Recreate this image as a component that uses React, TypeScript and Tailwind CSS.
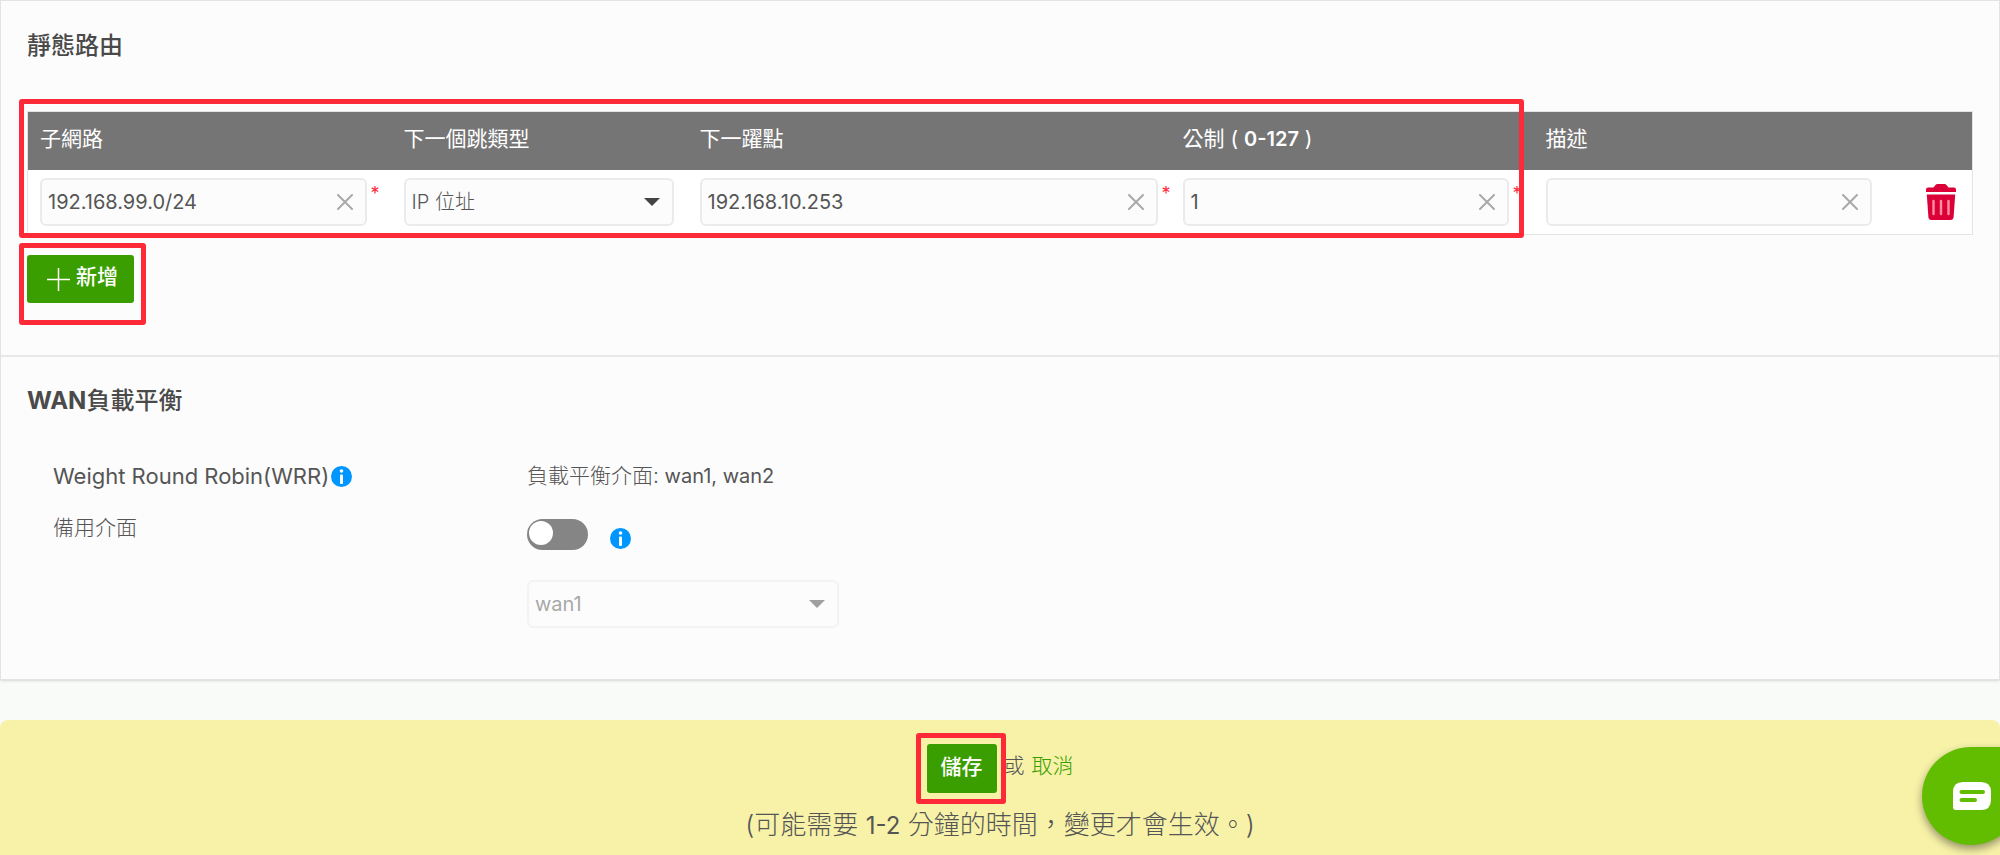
import React, { useState } from 'react';

interface TextFieldProps {
    label: string;
    value: string;
    required?: boolean;
    onChange: (value: string) => void;
}

const TextField: React.FC<TextFieldProps> = ({ label, value, required, onChange }) => (
    <div className="flex items-start">
        <div className="flex h-12 min-w-0 flex-1 items-center rounded-md border-2 border-[#ebebeb] bg-[#fcfcfc] pl-1.5 pr-3">
            <input
                type="text"
                aria-label={label}
                value={value}
                required={required}
                onChange={(e) => onChange(e.target.value)}
                className="h-full min-w-0 flex-1 bg-transparent text-xl text-[#555] outline-none"
            />
            <button type="button" aria-label={`清除${label}`} onClick={() => onChange('')} className="shrink-0">
                <svg viewBox="0 0 16 16" className="h-4 w-4" fill="none" stroke="#a9a9a9" strokeWidth="2" strokeLinecap="round">
                    <path d="M1 1l14 14M15 1L1 15" />
                </svg>
            </button>
        </div>
        <span className="w-[13px] pl-1 pt-1 text-lg leading-6 text-[#ff2a3a]">{required ? '*' : ''}</span>
    </div>
);

interface SelectFieldProps {
    id: string;
    options: string[];
    label: string;
    disabled?: boolean;
}

const SelectField: React.FC<SelectFieldProps> = ({ id, options, label, disabled }) => (
    <div className={`relative ${disabled ? 'opacity-50' : ''}`}>
        <select
            id={id}
            aria-label={label}
            disabled={disabled}
            className="block h-12 w-full appearance-none rounded-md border-2 border-[#ebebeb] bg-[#fcfcfc] px-1.5 text-xl text-[#555] outline-none"
        >
            {options.map((option) => (
                <option key={option}>{option}</option>
            ))}
        </select>
        <svg viewBox="0 0 16 8" className="pointer-events-none absolute right-3.5 top-5 h-2 w-4" fill="#444">
            <path d="M0 0h16L8 8z" />
        </svg>
    </div>
);

const InfoIcon: React.FC = () => (
    <svg viewBox="0 0 21 21" className="h-[21px] w-[21px] shrink-0" role="img" aria-label="說明">
        <circle cx="10.5" cy="10.5" r="10.5" fill="#0096ff" />
        <circle cx="10.5" cy="5" r="1.8" fill="#fff" />
        <rect x="9" y="8.5" width="3" height="9.5" rx="1" fill="#fff" />
    </svg>
);

const TrashIcon: React.FC = () => (
    <svg viewBox="0 0 30 36" className="h-9 w-[30px]" fill="#dc0038">
        <path d="M2 3.5h5.5L9.5 1Q10.300 0 11.500 0h7Q19.700 0 20.500 1l2 2.500H28q2 0 2 2V8H0V5.500q0-2 2-2z" />
        <path d="M.8 10.500h28.400L27.600 33q-.3 3-3 3H5.400q-2.700 0-3-3z" />
        <path d="M7.500 17v13M15 17v13M22.500 17v13" stroke="#ff8fa0" strokeWidth="2.400" strokeLinecap="round" />
    </svg>
);

const Highlight: React.FC<{ className: string }> = ({ className }) => (
    <div className={`pointer-events-none absolute rounded-[3px] border-5 border-[#ff2a38] ${className}`} />
);

const App: React.FC = () => {
    const [subnet, setSubnet] = useState('192.168.99.0/24');
    const [nextHop, setNextHop] = useState('192.168.10.253');
    const [metric, setMetric] = useState('1');
    const [description, setDescription] = useState('');
    const [backup, setBackup] = useState(false);

    return (
        <div className="flex min-h-screen flex-col overflow-x-hidden bg-[#f9fbf8] font-['Inter','Noto_Sans_CJK_TC',sans-serif] text-xl text-[#555]">
            <main className="border border-[#e3e3e3] bg-[#fcfcfc] shadow-sm">
                <section className="px-[26px] pb-[52px] pt-[29px]">
                    <h2 className="text-2xl font-medium leading-8 text-[#4a4a4a]">靜態路由</h2>
                    <div className="relative mt-[49px]">
                        <table className="w-full table-fixed border-collapse border border-[#e3e3e3] bg-white">
                            <colgroup>
                                <col className="w-[364px]" />
                                <col className="w-[296px]" />
                                <col />
                                <col className="w-[363px]" />
                                <col className="w-[363px]" />
                                <col className="w-[76px]" />
                            </colgroup>
                            <thead>
                                <tr className="h-[58px] bg-[#757575] text-left text-[21px] leading-7 text-white">
                                    <th className="px-3 pb-1 font-normal">子網路</th>
                                    <th className="px-3 pb-1 font-normal">下一個跳類型</th>
                                    <th className="px-3 pb-1 font-normal">下一躍點</th>
                                    <th className="px-3 pb-1 font-normal">公制 ( <span className="text-xl font-semibold">0-127</span> )</th>
                                    <th className="px-3 pb-1 font-normal">描述</th>
                                    <th aria-label="刪除" />
                                </tr>
                            </thead>
                            <tbody>
                                <tr className="h-[65px]">
                                    <td className="px-3">
                                        <TextField label="子網路" value={subnet} required onChange={setSubnet} />
                                    </td>
                                    <td className="pl-3 pr-[14px] font-light">
                                        <SelectField id="hop-type" label="下一個跳類型" options={['IP 位址']} />
                                    </td>
                                    <td className="pl-3">
                                        <TextField label="下一躍點" value={nextHop} required onChange={setNextHop} />
                                    </td>
                                    <td className="px-3">
                                        <TextField label="公制" value={metric} required onChange={setMetric} />
                                    </td>
                                    <td className="px-3">
                                        <TextField label="描述" value={description} onChange={setDescription} />
                                    </td>
                                    <td className="pr-4">
                                        <button type="button" aria-label="刪除" className="ml-auto block">
                                            <TrashIcon />
                                        </button>
                                    </td>
                                </tr>
                            </tbody>
                        </table>
                        <Highlight className="-bottom-[3px] -left-2 -top-3 right-[449px]" />
                    </div>
                    <div className="relative mt-5 w-fit">
                        <button type="button" className="flex h-12 items-center gap-1.5 rounded-[3px] bg-[#3b9e00] pl-5 pr-4 text-[21px] text-white">
                            <svg viewBox="0 0 23 23" className="h-[23px] w-[23px]" stroke="#fff" strokeWidth="1.500">
                                <path d="M11.500 0v23M0 11.500h23" />
                            </svg>
                            <span className="pb-1 font-medium">新增</span>
                        </button>
                        <Highlight className="-bottom-[22px] -left-2 -right-3 -top-3" />
                    </div>
                </section>

                <section className="border-t-2 border-[#e8e8e8] px-[26px] pb-[51px] pt-7">
                    <h2 className="text-2xl font-medium leading-8 text-[#4a4a4a]"><span className="font-bold">WAN</span>負載平衡</h2>
                    <div className="mt-[45px] grid grid-cols-[474px_1fr] gap-y-6 pl-[26px]">
                        <div className="flex items-center gap-0.5 text-[22px] leading-7">
                            Weight Round Robin(WRR)
                            <InfoIcon />
                        </div>
                        <p className="leading-7"><span className="text-[21px] font-light">負載平衡介面:</span> wan1, wan2</p>
                        <label htmlFor="backup-switch" className="text-[21px] font-light leading-7">備用介面</label>
                        <div className="pt-[5px]">
                            <div className="flex items-center gap-[22px]">
                                <input
                                    id="backup-switch"
                                    type="checkbox"
                                    role="switch"
                                    checked={backup}
                                    onChange={(e) => setBackup(e.target.checked)}
                                    className="h-[31px] w-[61px] appearance-none rounded-full bg-[#858585] p-0.5 before:block before:h-6 before:w-6 before:rounded-full before:bg-white checked:bg-[#3b9e00] checked:before:ml-auto"
                                />
                                <span className="pt-2"><InfoIcon /></span>
                            </div>
                            <div className="mt-[30px] w-[312px]">
                                <SelectField id="backup-wan" label="備用介面" options={['wan1', 'wan2']} disabled={!backup} />
                            </div>
                        </div>
                    </div>
                </section>
            </main>

            <footer className="mt-10 flex flex-1 flex-col items-center rounded-t-lg bg-[#f7f2a8] pt-6">
                <div className="flex items-start gap-[7px] text-[21px]">
                    <div className="relative">
                        <button type="button" className="block h-[49px] w-[70px] rounded-[3px] bg-[#3b9e00] pb-1 font-medium text-white">儲存</button>
                        <Highlight className="-bottom-[11px] -left-[11px] -right-[9px] -top-[11px]" />
                    </div>
                    <span className="pt-2 font-light leading-7">或</span>
                    <a href="#" className="pt-2 font-light leading-7 text-[#3b9e00]">取消</a>
                </div>
                <p className="mt-3.5 text-[26px] font-light leading-9">(可能需要 <span className="text-2xl font-normal">1-2</span> 分鐘的時間，變更才會生效。)</p>
            </footer>

            <button
                type="button"
                aria-label="聊天"
                className="fixed -right-5 bottom-2.5 flex h-[98px] w-[98px] items-center rounded-full rounded-tr-none bg-[#62bd00] pl-[31px] shadow-[0_4px_8px_rgba(0,0,0,0.4)]"
            >
                <svg viewBox="0 0 38 28" className="h-7 w-[38px]">
                    <path d="M10 0h18q10 0 10 10v8q0 10-10 10H3q-3 0-3-3V10Q0 0 10 0z" fill="#fff" />
                    <path d="M8.500 10h21.500M8.500 18h13.500" stroke="#62bd00" strokeWidth="4" strokeLinecap="round" />
                </svg>
            </button>
        </div>
    );
};

export default App;
